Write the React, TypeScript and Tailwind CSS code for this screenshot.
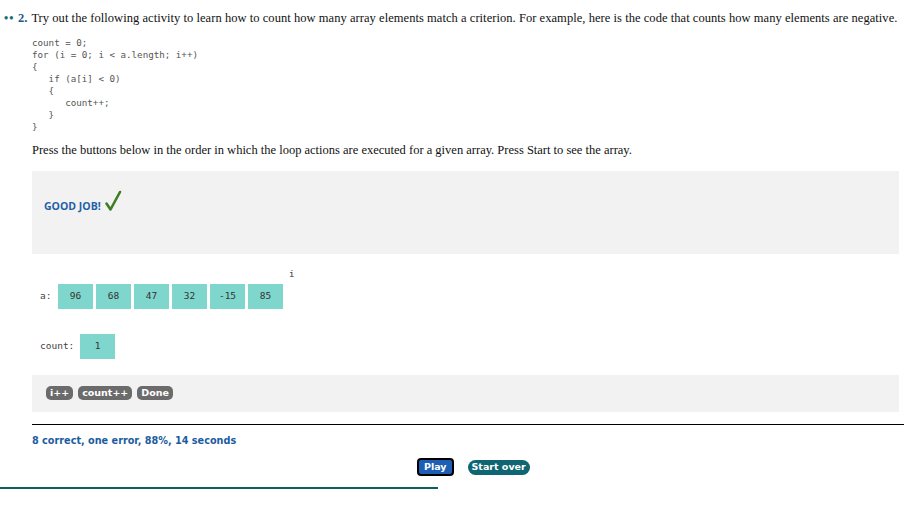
import React from "react";

const serif = { fontFamily: '"Liberation Serif", "Times New Roman", serif' };
const mono = { fontFamily: '"DejaVu Sans Mono", "Liberation Mono", monospace' };
const sans = { fontFamily: '"DejaVu Sans", Verdana, sans-serif' };
const open = { fontFamily: '"Open Sans", sans-serif' };

const codeLines = [
  "count = 0;",
  "for (i = 0; i < a.length; i++)",
  "{",
  "   if (a[i] < 0)",
  "   {",
  "      count++;",
  "   }",
  "}",
];

export default function App() {
  const arr = ["96", "68", "47", "32", "-15", "85"];
  return (
    <div className="w-[904px] h-[512px] bg-white relative overflow-hidden">
      <div className="pt-[9px] flex items-baseline text-[12.5px] text-[#111] whitespace-nowrap" style={serif}>
        <span className="pl-[4px] w-[18px] text-[#1b6e78] text-[12px] leading-none font-bold tracking-[1px]">••</span>
        <span className="text-[#1b5a8a] font-semibold mr-[4px]">2.</span>
        <span className="tracking-[0.05px]">Try out the following activity to learn how to count how many array elements match a criterion. For example, here is the code that counts how many elements are negative.</span>
      </div>

      <div className="ml-[32px] mr-[5px]">
        <pre className="mt-[9px] text-[9.2px] leading-[12px] text-[#555]" style={mono}>
          {codeLines.join("\n")}
        </pre>
        <div className="mt-[8px] text-[12.5px] text-[#111] whitespace-nowrap" style={serif}>
          Press the buttons below in the order in which the loop actions are executed for a given array. Press Start to see the array.
        </div>

        <div className="mt-[11px] h-[83px] bg-[#f2f2f2] flex items-start pl-[12px] pt-[19px]">
          <span className="text-[10.5px] font-bold text-[#1f5fa8] mt-[9px]" style={open}>GOOD JOB!</span>
          <svg width="18" height="22" viewBox="0 0 18 22" className="ml-[3px]">
            <path d="M2.5 13.5 L6.5 19.5 L16 2" fill="none" stroke="#3f7d23" strokeWidth="2.6" strokeLinecap="round" strokeLinejoin="round" />
          </svg>
        </div>

        <div className="relative h-[121px]">
          <span className="absolute left-[257px] top-[14px] text-[9px] text-[#333]" style={mono}>i</span>
          <div className="flex items-center pt-[30px]">
            <span className="w-[26px] pl-[8px] text-[9.5px] text-[#444]" style={mono}>a:</span>
            <div className="flex gap-[3px]">
              {arr.map((v, k) => (
                <div key={k} className="w-[35px] h-[25px] bg-[#7fd6cc] flex items-center justify-center text-[9.5px] text-[#333]" style={mono}>
                  {v}
                </div>
              ))}
            </div>
          </div>
          <div className="flex items-center mt-[25px]">
            <span className="w-[48px] pl-[8px] text-[9.5px] text-[#444]" style={mono}>count:</span>
            <div className="w-[35px] h-[25px] bg-[#7fd6cc] flex items-center justify-center text-[9.5px] text-[#333]" style={mono}>
              1
            </div>
          </div>
        </div>

        <div className="h-[37px] bg-[#f2f2f2] flex items-center gap-[5px] pl-[14px]" style={sans}>
          <span className="h-[14px] px-[4px] rounded-[5px] bg-[#6b6b6b] text-white text-[9.5px] font-bold flex items-center">i++</span>
          <span className="h-[14px] px-[4px] rounded-[5px] bg-[#6b6b6b] text-white text-[9.5px] font-bold flex items-center">count++</span>
          <span className="h-[14px] px-[4px] rounded-[5px] bg-[#6b6b6b] text-white text-[9.5px] font-bold flex items-center">Done</span>
        </div>

        <div className="mt-[12px] border-t border-black mr-[-5px]"></div>
        <div className="mt-[9px] text-[9.7px] font-bold text-[#1b5ca0]" style={sans}>
          8 correct, one error, 88%, 14 seconds
        </div>
      </div>

      <div className="flex items-center mt-[10px] pl-[417px] gap-[14px]" style={sans}>
        <span className="h-[18px] px-[5px] rounded-[4px] border-[2px] border-black bg-[#1d5fb4] text-white text-[9.5px] font-bold flex items-center">Play</span>
        <span className="h-[15px] px-[4px] rounded-full bg-[#0f6572] text-white text-[9.5px] font-bold flex items-center">Start over</span>
      </div>
      <div className="mt-[11px] w-[438px] h-[2px] bg-[#0d5f5a]"></div>
    </div>
  );
}
